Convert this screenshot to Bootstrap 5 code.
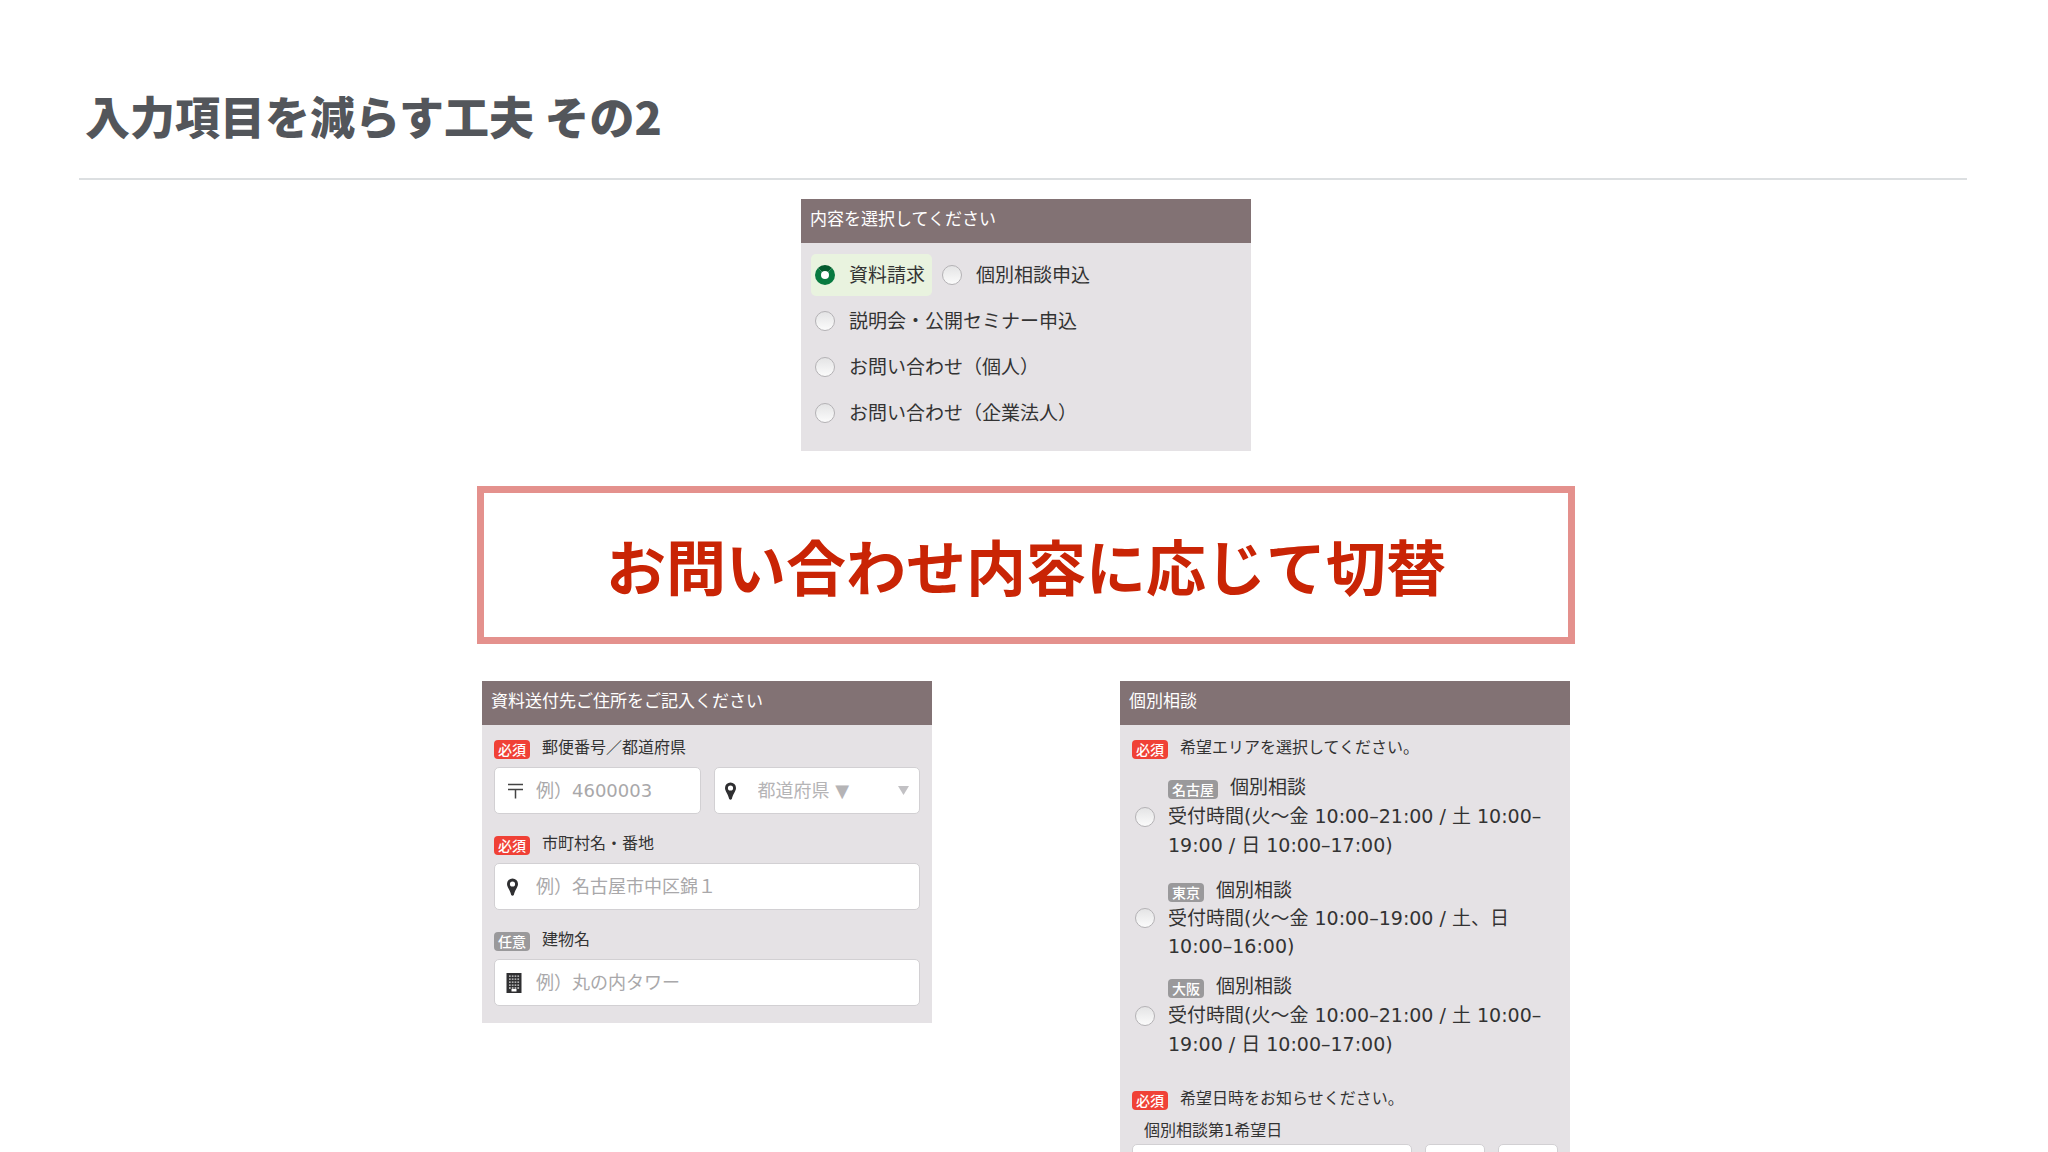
<!DOCTYPE html>
<html lang="ja">
<head>
<meta charset="utf-8">
<meta name="viewport" content="width=device-width, initial-scale=1">
<title>入力項目を減らす工夫 その2</title>
<link href="https://cdn.jsdelivr.net/npm/bootstrap@5.3.0/dist/css/bootstrap.min.css" rel="stylesheet">
<style>
  body { font-family: "Noto Sans CJK JP", sans-serif; color: #333; background: #fff; }
  .slide { padding: 0 81px 0 79px; }
  .slide-title { font-size: 45px; line-height: 60px; font-weight: 900; color: #53565b; padding: 86px 6px 32px; border-bottom: 2px solid #dcdfe1; }
  .stage { padding: 19px 0 0 6px; }
  .panel { width: 450px; max-width: 100%; background: #e5e2e5; font-family: "DejaVu Sans", "Noto Sans CJK JP", sans-serif; }
  .panel-head { background: #827274; color: #fff; font-family: "Noto Sans CJK JP", sans-serif; font-size: 17px; line-height: 24px; padding: 7px 9px 13px; }
  .choices { padding: 11px 10px 17px; row-gap: 4px; column-gap: 6px; }
  .choice { font-size: 19px; line-height: 42px; padding: 0 7px 0 4px; gap: 14px; border-radius: 5px; }
  .choice-on { background: #e9f3df; }
  .dot { appearance: none; flex: none; width: 20px; height: 20px; margin: 0; border: 1px solid #b4b2b5; border-radius: 50%; background: linear-gradient(#e4e4e5, #fbfbfb); }
  .dot:checked { border: 6px solid #087a40; border-top-color: #045b2e; background: #fff; }
  .callout { width: 1098px; max-width: 100%; margin: 35px 0 37px; padding: 42px 0; border: 7px solid #e4918d; color: #c92405; font-size: 60px; line-height: 60px; font-weight: 700; }
  .pair { width: 1088px; max-width: 100%; }
  .fields { padding: 15px 12px 17px; }
  .field-label { gap: 12px; height: 19px; font-size: 16px; line-height: 16px; }
  .field-text { padding-bottom: 3px; }
  .tag { display: inline-block; flex: none; font-family: "Noto Sans CJK JP", sans-serif; font-size: 14px; line-height: 19px; font-weight: 500; padding: 0 4px; border-radius: 4px; color: #fff; background: #9a999b; }
  .tag-must { background: #f04136; }
  .entry { height: 47px; margin-top: 8px; background: #fff; border: 1px solid #d2d0d3; border-radius: 5px; }
  .entry input, .entry select { flex: 1; min-width: 0; height: 100%; padding: 0; border: 0; outline: 0; background: transparent; appearance: none; font-size: 18px; color: #b5b4b6; }
  .entry input::placeholder { color: #a9a8aa; opacity: 1; }
  .entry-icon { flex: none; width: 41px; padding-left: 11px; line-height: 0; }
  .entry-icon-wide { width: 43px; padding-left: 9px; }
  .entry-caret { flex: none; margin-right: 10px; }
  .field + .field { margin-top: 22px; }
  .split { gap: 13px; }
  .split .entry { flex: 1 1 0; min-width: 0; }
  .slots { padding: 14px 0 32px 3px; }
  .slot { gap: 13px; font-size: 19px; line-height: 29px; }
  .slot .tag { margin-right: 12px; vertical-align: -1px; }
  .slot-tight { line-height: 28px; }
  .wish-label { font-size: 16px; line-height: 26px; padding: 8px 0 0 12px; display: block; }
  .wish .entry { margin-top: 0; }
  .wish .entry-day { flex: none; width: 60px; }
</style>
<script src="https://cdn.jsdelivr.net/npm/bootstrap@5.3.0/dist/js/bootstrap.bundle.min.js"></script>
</head>
<body class="vh-100 overflow-hidden">
<main class="slide">
  <h1 class="slide-title m-0">入力項目を減らす工夫 その2</h1>
  <div class="stage d-flex flex-column align-items-center">

    <section class="panel">
      <div class="panel-head">内容を選択してください</div>
      <div class="choices d-flex flex-wrap">
        <label class="choice choice-on d-flex align-items-center"><input class="dot" type="radio" name="kind" checked>資料請求</label>
        <label class="choice d-flex align-items-center"><input class="dot" type="radio" name="kind">個別相談申込</label>
        <div class="w-100 d-flex"><label class="choice d-flex align-items-center"><input class="dot" type="radio" name="kind">説明会・公開セミナー申込</label></div>
        <div class="w-100 d-flex"><label class="choice d-flex align-items-center"><input class="dot" type="radio" name="kind">お問い合わせ（個人）</label></div>
        <div class="w-100 d-flex"><label class="choice d-flex align-items-center"><input class="dot" type="radio" name="kind">お問い合わせ（企業法人）</label></div>
      </div>
    </section>

    <div class="callout text-center">お問い合わせ内容に応じて切替</div>

    <div class="pair d-flex justify-content-between align-items-start">
      <section class="panel">
        <div class="panel-head">資料送付先ご住所をご記入ください</div>
        <div class="fields">
          <div class="field">
            <div class="field-label d-flex align-items-center"><span class="tag tag-must">必須</span><label class="field-text" for="zip">郵便番号／都道府県</label></div>
            <div class="split d-flex">
              <div class="entry d-flex align-items-center">
                <span class="entry-icon"><svg width="18" height="18" viewBox="0 0 18 18" fill="none" stroke="#444" stroke-width="1.5"><path d="M2 2.5h15M2 7.5h15M9.500 7.500v9"/></svg></span>
                <input id="zip" type="text" placeholder="例）4600003">
              </div>
              <div class="entry d-flex align-items-center">
                <span class="entry-icon entry-icon-wide"><svg width="13" height="18" viewBox="0 0 13 18"><path fill="#2f2f31" fill-rule="evenodd" d="M6.500 0.500A5.500 5.500 0 0 0 1 6c0 3 3 6 4.200 11q1.300 1.500 2.600 0C9 12 12 9 12 6A5.500 5.500 0 0 0 6.500 0.500zM6.500 3.400a2.600 2.600 0 1 1 0 5.200a2.600 2.600 0 0 1 0-5.200z"/></svg></span>
                <select aria-label="都道府県"><option>都道府県 ▼</option></select>
                <svg class="entry-caret" width="11" height="9" viewBox="0 0 11 9"><path d="M0 0h11L5.500 9z" fill="#c2c1c4"/></svg>
              </div>
            </div>
          </div>
          <div class="field">
            <div class="field-label d-flex align-items-center"><span class="tag tag-must">必須</span><label class="field-text" for="town">市町村名・番地</label></div>
            <div class="entry d-flex align-items-center">
              <span class="entry-icon"><svg width="13" height="18" viewBox="0 0 13 18"><path fill="#2f2f31" fill-rule="evenodd" d="M6.500 0.500A5.500 5.500 0 0 0 1 6c0 3 3 6 4.200 11q1.300 1.500 2.600 0C9 12 12 9 12 6A5.500 5.500 0 0 0 6.500 0.500zM6.500 3.400a2.600 2.600 0 1 1 0 5.200a2.600 2.600 0 0 1 0-5.200z"/></svg></span>
              <input id="town" type="text" placeholder="例）名古屋市中区錦１">
            </div>
          </div>
          <div class="field">
            <div class="field-label d-flex align-items-center"><span class="tag">任意</span><label class="field-text" for="bldg">建物名</label></div>
            <div class="entry d-flex align-items-center">
              <span class="entry-icon"><svg width="16" height="20" viewBox="0 0 16 20"><path fill="#2f2f31" d="M0.500 0h15v20h-15z"/><path stroke="#d8d8d8" stroke-width="1.300" stroke-dasharray="1.700 1.100" d="M3 3.200h10.500M3 6.200h10.500M3 9.200h10.500M3 12.200h10.500M3 15h10.500"/><path fill="#fff" d="M5.500 16h5v2.500h-5z"/></svg></span>
              <input id="bldg" type="text" placeholder="例）丸の内タワー">
            </div>
          </div>
        </div>
      </section>

      <section class="panel">
        <div class="panel-head">個別相談</div>
        <div class="fields">
          <div class="field-label d-flex align-items-center"><span class="tag tag-must">必須</span><span class="field-text">希望エリアを選択してください。</span></div>
          <div class="slots">
            <label class="slot d-flex align-items-center mb-3"><input class="dot" type="radio" name="area"><span><span class="tag">名古屋</span>個別相談<br>受付時間(火〜金 10:00–21:00 / 土 10:00–<br>19:00 / 日 10:00–17:00)</span></label>
            <label class="slot slot-tight d-flex align-items-center mb-2 pb-1"><input class="dot" type="radio" name="area"><span><span class="tag">東京</span>個別相談<br>受付時間(火〜金 10:00–19:00 / 土、日<br>10:00–16:00)</span></label>
            <label class="slot d-flex align-items-center"><input class="dot" type="radio" name="area"><span><span class="tag">大阪</span>個別相談<br>受付時間(火〜金 10:00–21:00 / 土 10:00–<br>19:00 / 日 10:00–17:00)</span></label>
          </div>
          <div class="field-label d-flex align-items-center"><span class="tag tag-must">必須</span><span class="field-text">希望日時をお知らせください。</span></div>
          <label class="wish-label" for="wish1">個別相談第1希望日</label>
          <div class="wish split d-flex">
            <div class="entry d-flex"><input id="wish1" type="text"></div>
            <div class="entry entry-day d-flex"><input type="text" aria-label="月"></div>
            <div class="entry entry-day d-flex"><input type="text" aria-label="日"></div>
          </div>
        </div>
      </section>
    </div>
  </div>
</main>
</body>
</html>
